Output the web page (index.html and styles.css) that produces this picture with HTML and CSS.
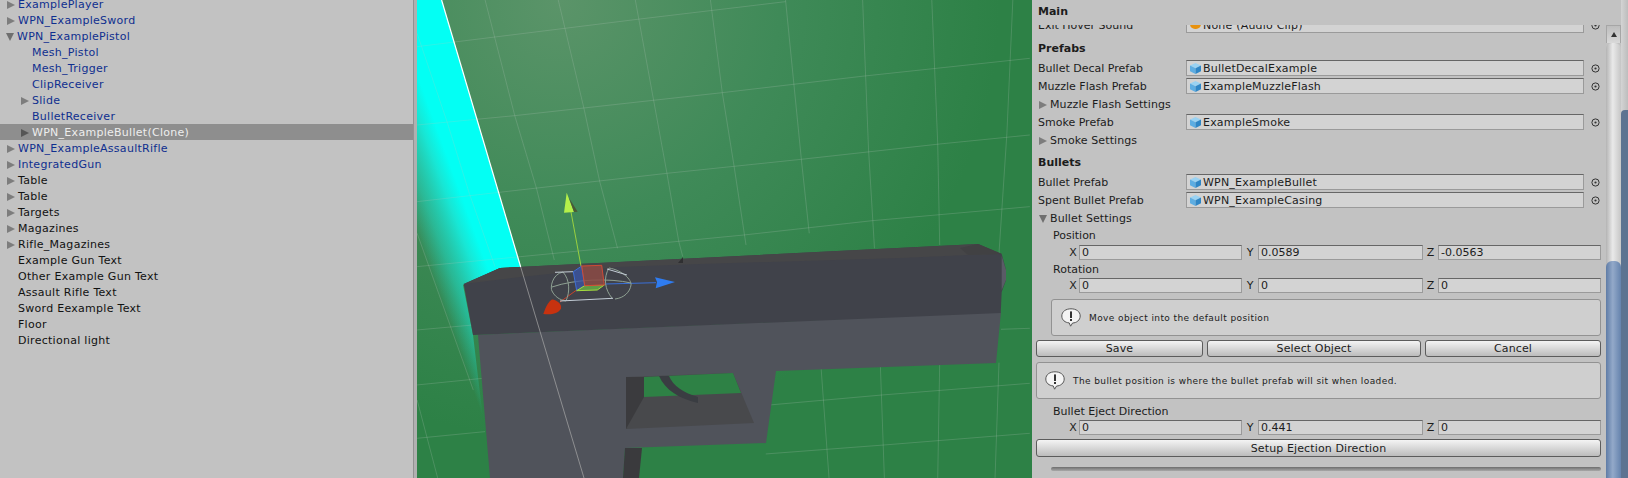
FILE: index.html
```html
<!DOCTYPE html>
<html lang="en">
<head>
    <meta charset="UTF-8">
    <meta name="viewport" content="width=device-width, initial-scale=1.0">
    <title>Weapon inspector</title>
    <link rel="stylesheet" href="styles.css">
</head>
<body>
    <svg class="defs" width="0" height="0">
        <symbol id="cube" viewBox="0 0 11 11">
            <path d="M5.5 0 L11 2.6 L5.5 5.2 L0 2.6 Z" fill="#9ad2f2"/>
            <path d="M0 2.6 L5.5 5.2 V11 L0 8.2 Z" fill="#5dade2"/>
            <path d="M11 2.6 L5.5 5.2 V11 L11 8.2 Z" fill="#2f86c6"/>
        </symbol>
        <symbol id="picker" viewBox="0 0 9 9">
            <circle cx="4.5" cy="4.5" r="3.6" fill="none" stroke="#333" stroke-width="1"/>
            <circle cx="4.5" cy="4.5" r="1.1" fill="#333"/>
        </symbol>
        <symbol id="info" viewBox="0 0 20 19">
            <path d="M10 .8 C15 .8 19.2 3.4 19.2 8 C19.2 12.2 15.4 15 11.6 15 L9.6 18.2 L8.2 14.9 C4 14.6 .8 12 .8 8 C.8 3.4 5 .8 10 .8 Z" fill="#f4f4f4" stroke="#555" stroke-width="1"/>
            <rect x="9" y="3.4" width="2" height="6.6" fill="#333"/>
            <rect x="9" y="11" width="2" height="2" fill="#333"/>
        </symbol>
    </svg>

    <div class="hierarchy">
        <div class="tree-row first prefab"><span class="arrow"></span>ExamplePlayer</div>
        <div class="tree-row prefab"><span class="arrow"></span>WPN_ExampleSword</div>
        <div class="tree-row prefab"><span class="arrow open"></span>WPN_ExamplePistol</div>
        <div class="tree-row child prefab"><span class="arrow none"></span>Mesh_Pistol</div>
        <div class="tree-row child prefab"><span class="arrow none"></span>Mesh_Trigger</div>
        <div class="tree-row child prefab"><span class="arrow none"></span>ClipReceiver</div>
        <div class="tree-row child prefab"><span class="arrow"></span>Slide</div>
        <div class="tree-row child prefab"><span class="arrow none"></span>BulletReceiver</div>
        <div class="tree-row child selected"><span class="arrow"></span>WPN_ExampleBullet(Clone)</div>
        <div class="tree-row prefab"><span class="arrow"></span>WPN_ExampleAssaultRifle</div>
        <div class="tree-row prefab"><span class="arrow"></span>IntegratedGun</div>
        <div class="tree-row"><span class="arrow"></span>Table</div>
        <div class="tree-row"><span class="arrow"></span>Table</div>
        <div class="tree-row"><span class="arrow"></span>Targets</div>
        <div class="tree-row"><span class="arrow"></span>Magazines</div>
        <div class="tree-row"><span class="arrow"></span>Rifle_Magazines</div>
        <div class="tree-row"><span class="arrow none"></span>Example Gun Text</div>
        <div class="tree-row"><span class="arrow none"></span>Other Example Gun Text</div>
        <div class="tree-row"><span class="arrow none"></span>Assault Rifle Text</div>
        <div class="tree-row"><span class="arrow none"></span>Sword Eexample Text</div>
        <div class="tree-row"><span class="arrow none"></span>Floor</div>
        <div class="tree-row"><span class="arrow none"></span>Directional light</div>
    </div>

    <div class="splitter"></div>

    <div class="scene">
        <svg width="615" height="478" viewBox="417 0 615 478">
            <defs>
                <radialGradient id="sky" gradientUnits="userSpaceOnUse" cx="560" cy="0" r="440">
                    <stop offset="0" stop-color="#5b9469"/>
                    <stop offset="0.5" stop-color="#3f8a58"/>
                    <stop offset="1" stop-color="#2d8146"/>
                </radialGradient>
                <linearGradient id="beam" gradientUnits="userSpaceOnUse" x1="417" y1="236.7" x2="469.6" y2="217.5">
                    <stop offset="0" stop-color="#1fd8c0" stop-opacity="0"/>
                    <stop offset="0.35" stop-color="#1fd8c0" stop-opacity="0.6"/>
                    <stop offset="0.75" stop-color="#18e6d4"/>
                    <stop offset="1" stop-color="#03fff4"/>
                </linearGradient>
            </defs>
            <rect x="417" y="0" width="615" height="478" fill="url(#sky)"/>
            <polygon points="417,0 441.6,0 520.7,267 500,268 463,285 473,335 490,478 417,478" fill="url(#beam)"/>

            <!-- coordinates below were read off a zoomed crop -->
            <g transform="translate(410 0) scale(.3953 .3333)">
                <g class="grid">
                    <polyline points="18,140 575,58 950,5"/>
                    <polyline points="18,375 265,347 790,278 1150,228 1568,175"/>
                    <polyline points="18,605 315,565 650,520 990,478 1340,432 1568,405"/>
                    <polyline points="18,800 280,770 845,705 1170,662 1568,620"/>
                    <polyline points="18,990 160,975"/>
                    <polyline points="1495,988 1568,985"/>
                    <polyline points="18,1155 185,1135"/>
                    <polyline points="910,1215 1195,1185 1568,1150"/>
                    <polyline points="18,1315 190,1295"/>
                    <polyline points="900,1362 1200,1335 1568,1300"/>
                    <polyline points="18,100 95,370 150,580 215,800"/>
                    <polyline points="190,0 265,347 320,565 365,780"/>
                    <polyline points="375,0 440,325 480,545 525,745"/>
                    <polyline points="570,0 650,520 680,725 690,770"/>
                    <polyline points="760,0 790,278 820,500 850,735"/>
                    <polyline points="950,0 990,478 1010,700"/>
                    <polyline points="1145,0 1160,450 1175,745"/>
                    <polyline points="1320,0 1335,432 1340,735"/>
                    <polyline points="1525,0 1510,400 1490,760"/>
                    <polyline points="18,700 160,1170"/>
                    <polyline points="1040,1105 1060,1434"/>
                    <polyline points="1190,1100 1200,1434"/>
                    <polyline points="1340,1090 1335,1434"/>
                    <polyline points="1490,1088 1480,1434"/>
                    <polyline points="18,1200 70,1434"/>
                </g>
            </g>

            <!-- pistol -->
            <polygon points="473,335 1001,312 996,363 776,371 766,443 625,448 623,478 490,478 478,335" fill="#50535b"/>
            <polygon points="625,448 642,448 639,478 623,478" fill="#3a3a3d"/>
            <polygon points="626,377 733,373 754,423 626,429" fill="#48494c"/>
            <polygon points="644,377 733,373 741,393 644,397" fill="#2e8145"/>
            <polygon points="626,377 644,377 644,397 626,429" fill="#3b3b3e"/>
            <path d="M659 376 H669 C673 386 684 393 698 397 L698 403 C680 399 665 390 659 376 Z" fill="#3a3d42"/>
            <polygon points="463.7,284 500,268 978,244 1001.7,254 1006,270 1006,280 1001.7,292 1000.7,313 473,335" fill="#40424a"/>
            <polygon points="463.7,284 500,268 978,244 1001.7,254 968,255 900,258 700,264 617,267 520,277" fill="#464648"/>
            <polygon points="960,248 978,244 1001.7,254 968,255" fill="#414143"/>
            <polygon points="1001.7,256 1006,270 1006,280 1001.7,290" fill="#5a5b66"/>
            <polygon points="678,263 683,257 683,263" fill="#2f2f31"/>
            <line class="beam-edge" x1="441.6" y1="0" x2="520.7" y2="267"/>
            <line class="beam-over" x1="520.7" y1="267" x2="584" y2="478"/>

            <!-- gizmo -->
            <line x1="571" y1="212" x2="581" y2="266" stroke="#9ad040"/>
            <line x1="605" y1="284" x2="656" y2="282.7" stroke="#3a6fd8"/>
            <line x1="560" y1="302" x2="578" y2="289" stroke="#c8432a"/>
            <g class="wire">
                <path d="M563 272 C552 274 550 288 552 291 C555 297 560 300 566 301"/>
                <path d="M563 272 C570 280 570 292 566 301"/>
                <path d="M609 268 C622 270 632 280 631 285 C630 292 624 298 615 299"/>
                <path d="M609 268 C603 278 605 290 612 298"/>
                <path d="M552 287 C575 279 610 278 631 283"/>
            </g>
            <g class="wire-bright">
                <path d="M555 272.3 L573 271.7"/>
                <path d="M607 269 L627 275"/>
                <path d="M560 301 L613 298.3"/>
            </g>
            <polygon points="573.3,271.7 581.7,266 584.7,285.7 576.7,290.7" fill="#3a55a8" fill-opacity="0.75" stroke="#3d6fd6"/>
            <polygon points="576.7,290.7 584.7,285.7 604.3,285 597.3,290" fill="#5f9a45" stroke="#a5dc3f"/>
            <polygon points="581.7,266 601.7,265.3 604.3,285 584.7,285.7" fill="#8c4a44" fill-opacity="0.85" stroke="#cf4a35"/>
            <polygon points="566.7,192.7 564,212.7 574,212" fill="#b5f04a"/>
            <polygon points="569,198 574,212 577.7,211.7" fill="#4a5a35"/>
            <polygon points="655,277.3 675,282 655.7,288.3 657,282" fill="#2f7cf0"/>
            <path d="M543.3 314 C546 306 549 301 552 299.5 C557 300 562 304 561 308.5 C558 314 551 315 543.3 314 Z" fill="#c7320f"/>
        </svg>
    </div>

    <div class="inspector">
        <div class="panel">
            <div class="panel-head">Main</div>
            <div class="panel-body">
                <div class="prop first-prop">
                    <span class="prop-label">Exit Hover Sound</span>
                    <div class="field"><span class="audio-icon"></span>None (Audio Clip)</div>
                    <svg class="picker"><use href="#picker"/></svg>
                </div>

                <div class="section-title">Prefabs</div>
                <div class="prop">
                    <span class="prop-label">Bullet Decal Prefab</span>
                    <div class="field"><svg class="cube"><use href="#cube"/></svg>BulletDecalExample</div>
                    <svg class="picker"><use href="#picker"/></svg>
                </div>
                <div class="prop gap">
                    <span class="prop-label">Muzzle Flash Prefab</span>
                    <div class="field"><svg class="cube"><use href="#cube"/></svg>ExampleMuzzleFlash</div>
                    <svg class="picker"><use href="#picker"/></svg>
                </div>
                <div class="foldout gap"><span class="arrow"></span>Muzzle Flash Settings</div>
                <div class="prop gap">
                    <span class="prop-label">Smoke Prefab</span>
                    <div class="field"><svg class="cube"><use href="#cube"/></svg>ExampleSmoke</div>
                    <svg class="picker"><use href="#picker"/></svg>
                </div>
                <div class="foldout gap"><span class="arrow"></span>Smoke Settings</div>

                <div class="section-title close">Bullets</div>
                <div class="prop">
                    <span class="prop-label">Bullet Prefab</span>
                    <div class="field"><svg class="cube"><use href="#cube"/></svg>WPN_ExampleBullet</div>
                    <svg class="picker"><use href="#picker"/></svg>
                </div>
                <div class="prop gap">
                    <span class="prop-label">Spent Bullet Prefab</span>
                    <div class="field"><svg class="cube"><use href="#cube"/></svg>WPN_ExampleCasing</div>
                    <svg class="picker"><use href="#picker"/></svg>
                </div>
                <div class="foldout gap"><span class="arrow open"></span>Bullet Settings</div>
                <div class="sub-label gap">Position</div>
                <div class="vector tight">
                    <span>X</span><div class="num">0</div>
                    <span>Y</span><div class="num">0.0589</div>
                    <span>Z</span><div class="num">-0.0563</div>
                </div>
                <div class="sub-label low">Rotation</div>
                <div class="vector">
                    <span>X</span><div class="num">0</div>
                    <span>Y</span><div class="num">0</div>
                    <span>Z</span><div class="num">0</div>
                </div>
                <div class="helpbox inset">
                    <svg class="info"><use href="#info"/></svg>
                    <span>Move object into the default position</span>
                </div>
                <div class="button-row">
                    <button class="btn">Save</button>
                    <button class="btn">Select Object</button>
                    <button class="btn">Cancel</button>
                </div>
                <div class="helpbox wide">
                    <svg class="info"><use href="#info"/></svg>
                    <span>The bullet position is where the bullet prefab will sit when loaded.</span>
                </div>
                <div class="sub-label eject">Bullet Eject Direction</div>
                <div class="vector">
                    <span>X</span><div class="num">0</div>
                    <span>Y</span><div class="num">0.441</div>
                    <span>Z</span><div class="num">0</div>
                </div>
                <button class="btn setup">Setup Ejection Direction</button>
                <div class="slider"></div>
            </div>
        </div>
        <div class="scrollbar">
            <div class="scroll-up"><span class="scroll-arrow"></span></div>
            <div class="scroll-track"><div class="scroll-thumb"></div></div>
        </div>
        <div class="edge"><div class="edge-fill"></div></div>
    </div>
</body>
</html>
```

FILE: styles.css
```css
html, body {
    margin: 0;
    height: 478px;
    overflow: hidden;
}
body {
    display: flex;
    width: 1628px;
    background-color: #c2c2c2;
    font-family: "DejaVu Sans", sans-serif;
    font-size: 11px;
    color: #1c1c1c;
}
.defs {
    position: absolute;
}

/* hierarchy */
.hierarchy {
    width: 413px;
    flex: none;
    overflow: hidden;
    letter-spacing: 0.28px;
}
.tree-row {
    display: flex;
    align-items: center;
    height: 16px;
    box-sizing: border-box;
    padding-top: 1px;
    line-height: 15px;
    padding-left: 7px;
    white-space: nowrap;
    color: #111;
}
.tree-row.first {
    margin-top: -4px;
}
.tree-row.child {
    padding-left: 21px;
}
.tree-row.prefab {
    color: #0f2f8f;
}
.tree-row.selected {
    background-color: #8e8e8e;
    color: #ededed;
}
.tree-row.selected .arrow {
    border-left-color: #565656;
}
.arrow {
    flex: none;
    width: 0;
    height: 0;
    margin-right: 3px;
    border-left: 8px solid #7d7d7d;
    border-top: 4px solid transparent;
    border-bottom: 4px solid transparent;
}
.arrow.open {
    margin-left: -1px;
    margin-right: 3px;
    border-left: 4.5px solid transparent;
    border-right: 4.5px solid transparent;
    border-top: 8px solid #6f6f6f;
    border-bottom: 0;
}
.arrow.none {
    border-left-color: transparent;
}
.splitter {
    width: 4px;
    flex: none;
    background-color: #b0b0b0;
    border-left: 1px solid #929292;
    box-sizing: border-box;
}

/* scene view */
.scene {
    width: 615px;
    flex: none;
    height: 478px;
}
.scene svg {
    display: block;
}
.grid polyline {
    fill: none;
    stroke: #b9c9bd;
    stroke-opacity: 0.22;
    stroke-width: 1px;
    vector-effect: non-scaling-stroke;
}
.beam-edge {
    stroke: #fff;
    stroke-width: 1.2;
}
.beam-over {
    stroke: #a8a8a8;
    stroke-opacity: 0.7;
}
.wire path {
    fill: none;
    stroke: #8fa193;
    stroke-width: 1;
}
.wire-bright path {
    fill: none;
    stroke: #c3ccd6;
    stroke-width: 1;
}

/* inspector */
.inspector {
    display: flex;
    width: 596px;
    flex: none;
    height: 478px;
}
.panel {
    width: 574px;
    flex: none;
    box-sizing: border-box;
    padding: 0 5px 0 4px;
    display: flex;
    flex-direction: column;
}
.panel-head {
    height: 25px;
    line-height: 24px;
    flex: none;
    padding-left: 2px;
    font-weight: bold;
}
.panel-body {
    flex: 1;
    overflow: hidden;
    min-height: 0;
}
.prop {
    display: flex;
    align-items: center;
    height: 16px;
    padding-left: 2px;
}
.first-prop {
    margin-top: -8px;
}
.prop-label {
    width: 148px;
    flex: none;
    white-space: nowrap;
}
.field {
    display: flex;
    align-items: center;
    width: 398px;
    height: 16px;
    flex: none;
    box-sizing: border-box;
    padding-left: 3px;
    background-color: #d3d3d3;
    border: 1px solid #9a9a9a;
    border-top-color: #666;
    white-space: nowrap;
    letter-spacing: 0.2px;
}
.cube {
    width: 11px;
    height: 11px;
    margin-right: 2px;
    flex: none;
}
.audio-icon {
    width: 11px;
    height: 8px;
    margin-right: 2px;
    flex: none;
    background-color: #e8920f;
    border-radius: 0 0 5px 5px;
}
.picker {
    width: 9px;
    height: 9px;
    margin-left: 7px;
    flex: none;
}
.section-title {
    height: 16px;
    line-height: 18px;
    padding-left: 2px;
    font-weight: bold;
    margin-top: 7px;
    margin-bottom: 4px;
}
.section-title.close {
    margin-top: 6px;
}
.gap {
    margin-top: 2px;
}
.foldout {
    display: flex;
    align-items: center;
    height: 16px;
    box-sizing: border-box;
    padding-top: 1px;
    line-height: 15px;
    padding-left: 3px;
    white-space: nowrap;
    letter-spacing: 0.1px;
}
.foldout .arrow {
    margin-right: 3px;
}
.foldout .arrow.open {
    margin-left: 0;
}
.sub-label {
    height: 16px;
    line-height: 16px;
    padding-left: 17px;
}
.sub-label.low {
    margin-top: 2px;
}
.sub-label.eject {
    margin-top: 5px;
}
.vector {
    display: grid;
    grid-template-columns: 12px 163px 16px 165px 15px 1fr;
    height: 15px;
    padding-left: 31px;
    line-height: 15px;
    text-align: center;
}
.vector.tight {
    margin-top: 1px;
}
.num {
    box-sizing: border-box;
    padding-left: 2px;
    line-height: 13px;
    text-align: left;
    background-color: #d3d3d3;
    border: 1px solid #9a9a9a;
    border-top-color: #666;
}
.helpbox {
    display: flex;
    align-items: center;
    height: 37px;
    box-sizing: border-box;
    background-color: #cfcfcf;
    border: 1px solid #929292;
    border-radius: 3px;
    font-size: 9px;
    letter-spacing: 0.4px;
    white-space: nowrap;
}
.helpbox.inset {
    margin: 6px 0 0 15px;
    padding-left: 9px;
}
.helpbox.wide {
    margin-top: 5px;
    padding-left: 8px;
}
.info {
    width: 20px;
    height: 19px;
    margin-right: 8px;
    flex: none;
}
.button-row {
    display: grid;
    grid-template-columns: 167px 214px 1fr;
    gap: 4px;
    margin-top: 4px;
}
.btn {
    height: 17px;
    padding: 0;
    box-sizing: border-box;
    font-family: inherit;
    font-size: 11px;
    letter-spacing: 0.12px;
    line-height: 15px;
    color: #1c1c1c;
    background: linear-gradient(#f4f4f4, #bcbcbc);
    border: 1px solid #5c5c5c;
    border-radius: 3px;
}
.btn.setup {
    display: block;
    width: 100%;
    height: 18px;
    margin-top: 4px;
}
.slider {
    height: 4px;
    margin: 10px 0 0 15px;
    background: linear-gradient(#6e6e6e, #a8a8a8);
    border-radius: 2px;
}

/* scrollbar */
.scrollbar {
    width: 15px;
    flex: none;
    display: flex;
    flex-direction: column;
    padding-top: 25px;
    box-sizing: border-box;
}
.scroll-up {
    display: flex;
    justify-content: center;
    padding-top: 6px;
    height: 18px;
    flex: none;
    box-sizing: border-box;
    background: linear-gradient(#bdbdbd, #d9d9d9);
    border: 1px solid #a6a6a6;
    border-bottom: 0;
}
.scroll-arrow {
    width: 0;
    height: 0;
    border-left: 3.5px solid transparent;
    border-right: 3.5px solid transparent;
    border-bottom: 5px solid #333;
}
.scroll-track {
    flex: 1;
    display: flex;
    flex-direction: column;
    justify-content: flex-end;
    background: linear-gradient(90deg, #b4b4b4, #e9e9e9 45%, #c6c6c6);
    border-radius: 6px 6px 0 0;
}
.scroll-thumb {
    height: 217px;
    background: linear-gradient(90deg, #5f7ca6, #93a9c9 45%, #6583ad);
    border-radius: 6px 6px 0 0;
}
.edge {
    width: 7px;
    flex: none;
    background: linear-gradient(90deg, #d4d4d4, #bdbdbd);
}
.edge-fill {
    height: 368px;
    margin-top: 110px;
    background-color: #5d7391;
    border-radius: 4px 0 0 0;
}
```
